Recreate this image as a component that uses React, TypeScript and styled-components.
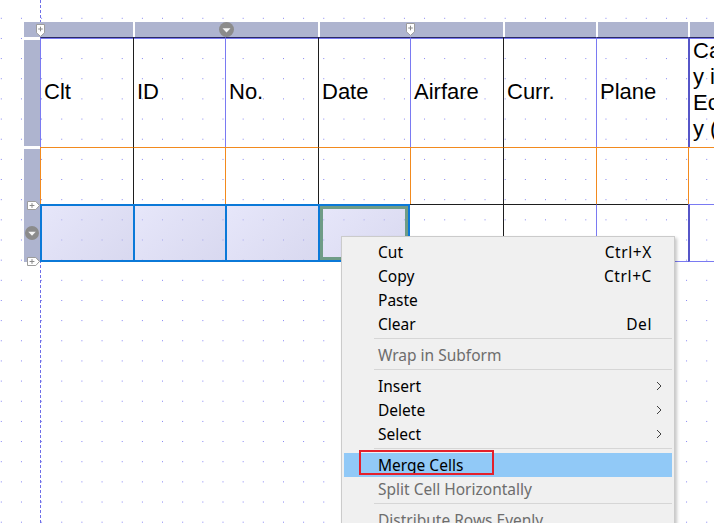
import React from "react";
import styled, { createGlobalStyle } from "styled-components";

const BLUE = "#7a7af2";
const BLACK = "#1e1e1e";
const ORANGE = "#f28a1e";
const NAVY = "#2a2a66";
const SEL = "#0b79d8";
const BAR = "#aeb4cf";
const DOT = "#7d7df2";

const Global = createGlobalStyle`
  html, body { margin: 0; padding: 0; background: #fff; }
  body { width: 714px; height: 523px; overflow: hidden; }
`;

const Canvas = styled.div`
  position: relative;
  width: 714px;
  height: 523px;
  overflow: hidden;
  box-sizing: border-box;
  padding: 22px 0 0 24px;
  background-color: #fff;
  background-image:
    linear-gradient(to right, transparent 1px, #fff 1px),
    linear-gradient(to bottom, transparent 1px, #fff 1px),
    linear-gradient(${DOT}, ${DOT});
  background-size: 20.17px 20.17px, 20.17px 20.17px, 100% 100%;
  background-position: 0.8px 17.8px, 0.8px 17.8px, 0 0;
`;

const Guide = styled.div`
  position: absolute;
  left: 40px;
  top: 0;
  bottom: 0;
  width: 1px;
  background: repeating-linear-gradient(to bottom, #6e6ee8 0 3px, transparent 3px 5px);
`;

const Sheet = styled.div`
  position: relative;
  z-index: 1;
  display: grid;
  grid-template-columns: 16px 93px 92px 93px 92px 93px 93px 92px 92px;
  grid-template-rows: 15px 110px 57px 58px;
  width: max-content;
  font-family: "Liberation Sans", Arial, sans-serif;
  color: #000;
`;

const BarSeg = styled.div<{ $span: number; $first?: boolean }>`
  grid-column: span ${(p) => p.$span};
  background: ${BAR};
  border-left: ${(p) => (p.$first ? "none" : "2px solid #fff")};
  display: flex;
  align-items: center;
  justify-content: center;
`;

const SideBar = styled.div<{ $mt: number; $mb?: number }>`
  background: ${BAR};
  margin-top: ${(p) => p.$mt}px;
  margin-bottom: ${(p) => p.$mb ?? 0}px;
  display: flex;
  align-items: center;
  justify-content: center;
`;

type CellProps = {
  $l?: string;
  $lw?: number;
  $t?: string;
  $tw?: number;
  $b?: string;
  $bw?: number;
  $r?: string;
  $rw?: number;
  $sel?: boolean;
  $focus?: boolean;
  $navy?: boolean;
};

const line = (c?: string, w?: number) => (c ? `${w ?? 1}px solid ${c}` : "none");

const Cell = styled.div<CellProps>`
  box-sizing: border-box;
  min-width: 0;
  overflow: hidden;
  border-left: ${(p) => line(p.$l, p.$lw)};
  border-top: ${(p) => line(p.$t, p.$tw)};
  border-bottom: ${(p) => line(p.$b, p.$bw)};
  border-right: ${(p) => line(p.$r, p.$rw)};
  background: ${(p) =>
    p.$sel
      ? "linear-gradient(135deg, rgba(206,206,245,0.5), rgba(178,178,224,0.5))"
      : "transparent"};
  box-shadow: ${(p) =>
    p.$focus ? "inset 0 0 0 3px #6f9c86" : p.$navy ? `inset 0 1px 0 ${BLUE}` : "none"};
`;

const HeadCell = styled(Cell)`
  display: flex;
  align-items: center;
  padding: 0 2px 2px 3px;
  font-size: 22px;
  white-space: nowrap;
`;

const WrapHead = styled(Cell)`
  padding: 0 2px 0 3px;
  font-size: 22px;
  line-height: 26px;
  overflow-wrap: anywhere;
`;

const Tag = styled.svg<{ $x: number; $y: number }>`
  position: absolute;
  left: ${(p) => p.$x}px;
  top: ${(p) => p.$y}px;
  z-index: 3;
`;

const Knob = styled.svg`
  display: block;
  flex: none;
`;

const DownTag = ({ x, y }: { x: number; y: number }) => (
  <Tag $x={x} $y={y} width="9" height="13" viewBox="0 0 9 13">
    <path d="M0.5 0.5 H8.5 V8.8 L4.5 12.4 L0.5 8.8 Z" fill="#fff" stroke="#9c9c9c" />
    <path d="M2.2 5 H6.8 M4.5 2.7 V7.3" stroke="#8a8a8a" strokeWidth="1" />
  </Tag>
);

const RightTag = ({ x, y }: { x: number; y: number }) => (
  <Tag $x={x} $y={y} width="13" height="9" viewBox="0 0 13 9">
    <path d="M0.5 0.5 H8.8 L12.4 4.5 L8.8 8.5 H0.5 Z" fill="#fff" stroke="#9c9c9c" />
    <path d="M2.6 4.5 H7.4 M5 2.1 V6.9" stroke="#8a8a8a" strokeWidth="1" />
  </Tag>
);

const DropKnob = ({ size }: { size: number }) => (
  <Knob width={size} height={size} viewBox="0 0 15 15">
    <circle cx="7.5" cy="7.5" r="7.5" fill="#8b8b8b" />
    <path d="M3.5 6.2 H11.5 L7.5 10.4 Z" fill="#f6f6f6" />
  </Knob>
);

/* ---------- Context menu ---------- */

const Menu = styled.div`
  position: absolute;
  left: 341px;
  top: 236px;
  width: 334px;
  box-sizing: border-box;
  z-index: 5;
  background: #f0f0f0;
  border: 1px solid #cbcbcb;
  box-shadow: 2px 2px 3px rgba(0, 0, 0, 0.22);
  padding: 3px 2px;
  font-family: "Noto Sans", "Segoe UI", sans-serif;
  font-size: 15.5px;
`;

const Item = styled.div<{ $disabled?: boolean; $active?: boolean }>`
  position: relative;
  height: 24px;
  display: flex;
  align-items: center;
  padding: 0 20px 1px 34px;
  box-sizing: border-box;
  color: ${(p) => (p.$disabled ? "#6d6d6d" : "#000")};
  background: ${(p) => (p.$active ? "#91c9f7" : "transparent")};
  white-space: nowrap;
`;

const Label = styled.span`
  flex: 1;
`;

const Shortcut = styled.span`
  letter-spacing: 0.6px;
`;

const Arrow = styled.svg`
  display: block;
  margin-right: -10px;
`;

const Sep = styled.div`
  height: 1px;
  margin: 2px 0 4px 30px;
  background: #d6d6d6;
`;

const Callout = styled.div`
  position: absolute;
  left: 15px;
  top: -3px;
  width: 135px;
  height: 25px;
  box-sizing: border-box;
  border: 2px solid #e4202b;
`;

const SubArrow = () => (
  <Arrow width="6" height="10" viewBox="0 0 6 10">
    <path d="M1 1 L5 5 L1 9" fill="none" stroke="#404040" strokeWidth="1" />
  </Arrow>
);

const headerNames = ["Clt", "ID", "No.", "Date", "Airfare", "Curr.", "Plane"];
const headLines = [BLUE, BLACK, BLUE, BLACK, BLUE, BLACK, BLUE];
const row2Lines = [ORANGE, BLACK, ORANGE, BLACK, ORANGE, BLACK, ORANGE, ORANGE];

export default function App() {
  return (
    <>
      <Global />
      <Canvas>
        <Guide />
        <Sheet>
          {/* column header strip */}
          <BarSeg $span={2} $first />
          <BarSeg $span={2}>
            <DropKnob size={15} />
          </BarSeg>
          <BarSeg $span={2} />
          <BarSeg $span={1} />
          <BarSeg $span={1} />
          <BarSeg $span={1} />

          {/* header row */}
          <SideBar $mt={3} $mb={1} />
          {headerNames.map((n, i) => (
            <HeadCell key={n} $l={headLines[i]} $t={NAVY} $navy>
              {n}
            </HeadCell>
          ))}
          <WrapHead $l="#5656c8" $lw={2} $t={NAVY} $navy>
            Category in Economy (Y/N)
          </WrapHead>

          {/* second row */}
          <SideBar $mt={2} />
          {row2Lines.map((c, i) => (
            <Cell key={i} $l={c} $t={ORANGE} />
          ))}

          {/* third row (selection) */}
          <SideBar $mt={0}>
            <DropKnob size={14} />
          </SideBar>
          <Cell $sel $l={SEL} $lw={2} $t={SEL} $tw={2} $b={SEL} $bw={2} />
          <Cell $sel $l={SEL} $lw={2} $t={SEL} $tw={2} $b={SEL} $bw={2} />
          <Cell $sel $l={SEL} $lw={2} $t={SEL} $tw={2} $b={SEL} $bw={2} />
          <Cell $sel $focus $l={SEL} $lw={2} $t={SEL} $tw={2} $b={SEL} $bw={2} $r={SEL} $rw={2} />
          <Cell $t={BLACK} $b={BLUE} />
          <Cell $l={BLACK} $t={BLACK} $b={BLUE} />
          <Cell $l={BLUE} $t={BLACK} $b={BLUE} />
          <Cell $l="#5656c8" $lw={2} $t={BLUE} $b={BLUE} />

          <DownTag x={12} y={2} />
          <DownTag x={382} y={1} />
          <RightTag x={3} y={179} />
          <RightTag x={3} y={235} />
        </Sheet>

        <Menu>
          <Item>
            <Label>Cut</Label>
            <Shortcut>Ctrl+X</Shortcut>
          </Item>
          <Item>
            <Label>Copy</Label>
            <Shortcut>Ctrl+C</Shortcut>
          </Item>
          <Item>
            <Label>Paste</Label>
          </Item>
          <Item>
            <Label>Clear</Label>
            <Shortcut>Del</Shortcut>
          </Item>
          <Sep />
          <Item $disabled>
            <Label>Wrap in Subform</Label>
          </Item>
          <Sep />
          <Item>
            <Label>Insert</Label>
            <SubArrow />
          </Item>
          <Item>
            <Label>Delete</Label>
            <SubArrow />
          </Item>
          <Item>
            <Label>Select</Label>
            <SubArrow />
          </Item>
          <Sep />
          <Item $active>
            <Label>Merge Cells</Label>
            <Callout />
          </Item>
          <Item $disabled>
            <Label>Split Cell Horizontally</Label>
          </Item>
          <Sep />
          <Item $disabled>
            <Label>Distribute Rows Evenly</Label>
          </Item>
          <Item $disabled>
            <Label>Distribute Columns Evenly</Label>
          </Item>
        </Menu>
      </Canvas>
    </>
  );
}
